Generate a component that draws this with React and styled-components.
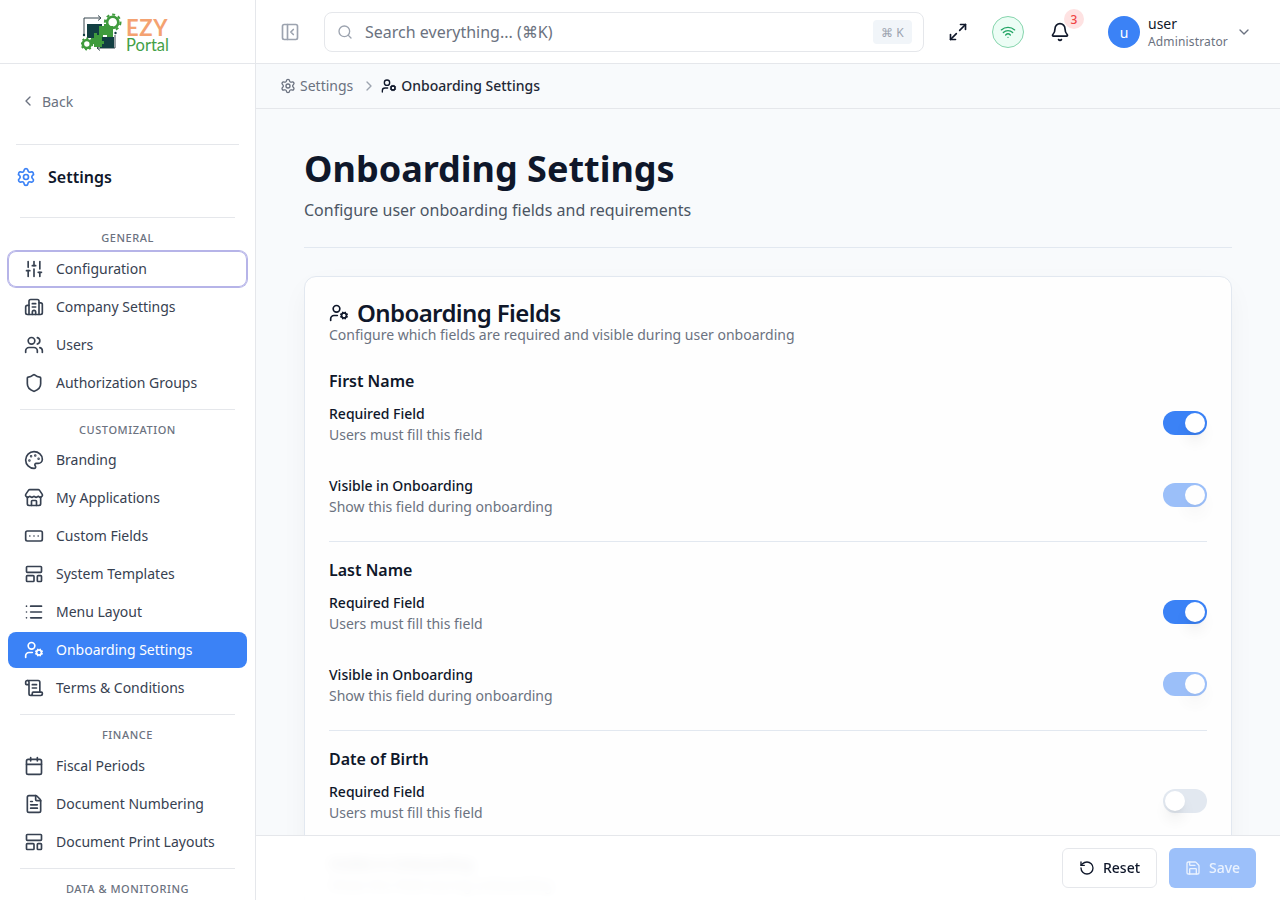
import React from "react";
import styled, { createGlobalStyle } from "styled-components";
import {
  Bell, Building2, Calendar, ChevronDown, ChevronLeft, ChevronRight, FileText, LayoutTemplate, List,
  Maximize2, Palette, PanelLeftClose, RectangleEllipsis, RotateCcw, Save, ScrollText, Search, Settings,
  Shield, SlidersVertical, Store, UserCog, Users, Wifi,
} from "lucide-react";

const Global = createGlobalStyle`
  html, body { margin: 0; height: 100%; overflow: hidden; }
  body { font-family: "Noto Sans", "Liberation Sans", sans-serif; color: #0f172a; background: #fff; }
  #root { height: 100vh; }
  * { box-sizing: border-box; }
`;

const Shell = styled.div`display: flex; height: 900px; overflow: hidden;`;
const Sidebar = styled.aside`width: 256px; flex: none; border-right: 1px solid #e5e7eb; background: #fff; overflow: hidden;`;
const LogoBar = styled.div`height: 64px; border-bottom: 1px solid #e5e7eb; display: flex; align-items: center; justify-content: center; padding-right: 5px; gap: 3px;`;
const LogoWords = styled.div`display: flex; flex-direction: column; font-family: Lato, "Open Sans", sans-serif; margin-top: 7px;`;
const LogoEzy = styled.span`font-size: 22px; font-weight: 700; line-height: 20px; color: #f4a271; letter-spacing: .6px;`;
const LogoPortal = styled.span`font-size: 16.5px; font-weight: 400; line-height: 15px; color: #43a047;`;
const BackRow = styled.div`height: 36px; margin: 19px 16px 0 20px; display: flex; align-items: center; gap: 6px; color: #6b7280; font-size: 14px;`;
const SideRule = styled.div`height: 1px; background: #e5e7eb; margin: ${p => p.$m};`;
const SettingsHead = styled.div`display: flex; align-items: center; gap: 12px; margin: 22px 16px 0; height: 20px; font-size: 16px; font-weight: 600; color: #0f172a; svg { color: #3b82f6; }`;
const GroupLabel = styled.div`height: 16px; line-height: 16px; margin: 12px 0 4.5px; text-align: center; font-size: 11px; font-weight: 500; letter-spacing: .55px; color: #6b7280;`;
const Items = styled.div`display: flex; flex-direction: column; gap: 2px; margin: 0 8px;`;
const Item = styled.div`
  height: 36px; line-height: 20px; border-radius: 8px; padding: 0 16px; display: flex; align-items: center; gap: 12px; font-size: 14px;
  color: ${p => (p.$active ? "#fff" : "#374151")};
  background: ${p => (p.$active ? "#3b82f6" : "transparent")};
  box-shadow: ${p => (p.$focus ? "0 0 0 1px #b6b4e8, inset 0 0 0 1px #b6b4e8" : "none")};
  svg { flex: none; }
`;

const Main = styled.div`flex: 1; min-width: 0; display: flex; flex-direction: column; position: relative; background: #f8fafc;`;
const Topbar = styled.header`height: 64px; flex: none; background: #fff; border-bottom: 1px solid #e5e7eb; display: flex; align-items: center; padding: 1px 24px 0;`;
const ToggleBtn = styled.div`color: #9ca3af; display: flex; margin-right: 24px;`;
const SearchBox = styled.div`width: 600px; height: 40px; border: 1px solid #e5e7eb; border-radius: 8px; display: flex; align-items: center; padding: 0 11px 0 12px; gap: 12px; color: #9ca3af; background: #fff;`;
const Placeholder = styled.span`flex: 1; font-size: 16px; color: #6b7280;`;
const Kbd = styled.span`width: 39px; height: 24px; border-radius: 4px; background: #f1f5f9; color: #9ca3af; font-size: 12px; display: flex; align-items: center; justify-content: center;`;
const IconAction = styled.div`display: flex; color: #0f172a; margin-left: ${p => p.$ml}px; position: relative;`;
const WifiDot = styled.div`width: 32px; height: 32px; margin-left: 24px; border-radius: 50%; background: #ecfdf5; border: 1px solid #86d5ad; color: #22a565; display: flex; align-items: center; justify-content: center;`;
const Badge = styled.span`position: absolute; top: -13px; left: 14px; width: 20px; height: 20px; border-radius: 50%; background: #fee2e2; color: #ef4444; font-size: 12px; font-weight: 500; display: flex; align-items: center; justify-content: center;`;
const Avatar = styled.div`width: 32px; height: 32px; margin-left: 38px; border-radius: 50%; background: #3b82f6; color: #fff; font-size: 14px; display: flex; align-items: center; justify-content: center;`;
const UserInfo = styled.div`margin-left: 8px; display: flex; flex-direction: column; padding-top: 2px;`;
const UserName = styled.span`font-size: 14px; line-height: 18px; color: #0f172a;`;
const UserRole = styled.span`font-size: 12px; line-height: 18px; letter-spacing: .15px; color: #6b7280;`;
const UserCaret = styled.div`margin-left: 8px; color: #6b7280; display: flex;`;

const Crumbs = styled.nav`height: 45px; line-height: 20px; flex: none; border-bottom: 1px solid #e5e7eb; display: flex; align-items: center; padding: 0 24px 1px; font-size: 14px; color: #6b7280;`;
const CrumbIcon = styled.span`display: flex; margin-right: 4px; color: ${p => p.$dark ? "#0f172a" : "#6b7280"};`;
const CrumbSep = styled.span`display: flex; margin: 0 4px 0 8px; color: #9ca3af;`;
const CrumbNow = styled.span`color: #1f2937; font-weight: 500;`;

const Content = styled.main`flex: 1; min-height: 0; overflow: hidden; padding: 32px 48px 0;`;
const PageTitle = styled.h1`margin: 0; font-size: 36px; line-height: 56px; font-weight: 700; color: #0f172a;`;
const PageSub = styled.p`margin: 0; font-size: 16px; line-height: 26px; color: #4b5563;`;
const PageRule = styled.div`height: 1px; background: #e2e8f0; margin: 24px 0 28px;`;
const Card = styled.section`border: 1px solid #e2e8f0; border-radius: 12px; background: #fefefe; box-shadow: 0 10px 30px -5px rgba(15, 23, 42, .06); padding: 24px;`;
const CardTitle = styled.h2`margin: 0; display: flex; align-items: center; gap: 8px; font-size: 24px; line-height: 24px; font-weight: 600; color: #0f172a; letter-spacing: -.6px;`;
const CardSub = styled.p`margin: 0 0 24px; font-size: 14px; line-height: 20px; color: #6b7280;`;
const FieldGroup = styled.div`padding-bottom: 21px; margin-bottom: 16px; border-bottom: ${p => p.$last ? "none" : "1px solid #e2e8f0"};`;
const FieldName = styled.h3`margin: 0 0 7px; font-size: 16px; line-height: 24px; font-weight: 600; color: #0f172a;`;
const SettingRow = styled.div`display: flex; align-items: center; justify-content: space-between; height: 48px; margin-bottom: 24px; &:last-child { margin-bottom: 0; }`;
const SettingLabel = styled.div`font-size: 14px; line-height: 21px; font-weight: 500; color: #0f172a;`;
const SettingHint = styled.div`font-size: 14px; line-height: 21px; color: #6b7280;`;
const Track = styled.div`
  width: 44px; height: 24px; border-radius: 12px; padding: 2px; display: flex; margin-bottom: 2px;
  justify-content: ${p => (p.$on ? "flex-end" : "flex-start")};
  background: ${p => (p.$on ? "#3b82f6" : "#e2e8f0")};
  opacity: ${p => (p.$dim ? 0.5 : 1)};
`;
const Thumb = styled.div`width: 20px; height: 20px; border-radius: 50%; background: #fff; box-shadow: 0 10px 15px -3px rgba(0,0,0,.1), 0 4px 6px -4px rgba(0,0,0,.1);`;

const Footer = styled.footer`position: absolute; left: 0; right: 0; bottom: 0; height: 65px; border-top: 1px solid #e5e7eb; background: rgba(255,255,255,.92); backdrop-filter: blur(6px); display: flex; align-items: center; justify-content: flex-end; gap: 12px; padding: 0 24px;`;
const ResetButton = styled.div`width: 95px; height: 40px; line-height: 20px; border: 1px solid #e5e7eb; border-radius: 6px; background: #fff; display: flex; align-items: center; justify-content: center; gap: 8px; font-size: 14px; font-weight: 500; color: #0f172a;`;
const SaveButton = styled.div`width: 87px; height: 40px; line-height: 20px; border-radius: 6px; background: #9cc0fa; display: flex; align-items: center; justify-content: center; gap: 8px; font-size: 14px; font-weight: 500; color: #eaf2fe;`;

const Logo = () => (
  <svg width="42" height="40" viewBox="0 0 42 40" fill="none">
    <path d="M3 23V6h16" stroke="#37474f" strokeWidth="1" />
    <path d="M17 3.5 20 6l-3 2.5" stroke="#37474f" strokeWidth="1" />
    <path d="M34 23v13H16" stroke="#37474f" strokeWidth="1" />
    <path d="M19 33.5 16 36l3 2.5" stroke="#37474f" strokeWidth="1" />
    <rect x="6" y="12" width="15" height="14" fill="#123f42" />
    <rect x="19" y="25" width="14" height="11" fill="#123f42" />
    <circle cx="31.7" cy="10.3" r="5.6" stroke="#3f9b3d" strokeWidth="2.6" />
    <circle cx="31.7" cy="10.3" r="7.8" stroke="#3f9b3d" strokeWidth="2" strokeDasharray="3 3" />
    <path d="M18 14h5v-2h4v2h5v11h-6v-2h-4v2h-4z" fill="#3f9b3d" />
    <path d="M13 21h3v2h5v6h2v3h-2v3h-8v-3h-3v-6h3z" fill="#3f9b3d" />
    <circle cx="5.8" cy="32" r="4" fill="#fff" stroke="#3f9b3d" strokeWidth="2.6" />
    <circle cx="5.8" cy="32" r="5.6" stroke="#3f9b3d" strokeWidth="1.6" strokeDasharray="2 2.2" />
    <circle cx="3" cy="23" r="1.2" fill="#123f42" />
    <circle cx="34.5" cy="21" r="1.2" fill="#123f42" />
  </svg>
);

const groups = [
  { label: "GENERAL", items: [["Configuration", SlidersVertical, "focus"], ["Company Settings", Building2], ["Users", Users], ["Authorization Groups", Shield]] },
  { label: "CUSTOMIZATION", items: [["Branding", Palette], ["My Applications", Store], ["Custom Fields", RectangleEllipsis], ["System Templates", LayoutTemplate], ["Menu Layout", List], ["Onboarding Settings", UserCog, "active"], ["Terms & Conditions", ScrollText]] },
  { label: "FINANCE", items: [["Fiscal Periods", Calendar], ["Document Numbering", FileText], ["Document Print Layouts", LayoutTemplate]] },
  { label: "DATA & MONITORING", items: [] },
];

const fields = [
  { name: "First Name", required: true, visible: true },
  { name: "Last Name", required: true, visible: true },
  { name: "Date of Birth", required: false, visible: false },
];

const Setting = ({ label, hint, on, dim }) => (
  <SettingRow>
    <div>
      <SettingLabel>{label}</SettingLabel>
      <SettingHint>{hint}</SettingHint>
    </div>
    <Track $on={on} $dim={dim}><Thumb /></Track>
  </SettingRow>
);

export default function App() {
  return (
    <Shell>
      <Global />
      <Sidebar>
        <LogoBar>
          <Logo />
          <LogoWords><LogoEzy>EZY</LogoEzy><LogoPortal>Portal</LogoPortal></LogoWords>
        </LogoBar>
        <BackRow><ChevronLeft size={16} />Back</BackRow>
        <SideRule $m="25px 16px 0 16px" />
        <SettingsHead><Settings size={20} />Settings</SettingsHead>
        {groups.map((g, i) => (
          <div key={g.label}>
            <SideRule $m={i === 0 ? "30.1px 20px 0 20px" : "8px 20px 0 20px"} />
            <GroupLabel>{g.label}</GroupLabel>
            <Items>
              {g.items.map(([text, Icon, state]) => (
                <Item key={text} $active={state === "active"} $focus={state === "focus"}>
                  <Icon size={20} />{text}
                </Item>
              ))}
            </Items>
          </div>
        ))}
      </Sidebar>
      <Main>
        <Topbar>
          <ToggleBtn><PanelLeftClose size={20} /></ToggleBtn>
          <SearchBox>
            <Search size={16} />
            <Placeholder>Search everything... (⌘K)</Placeholder>
            <Kbd>⌘ K</Kbd>
          </SearchBox>
          <IconAction $ml={24}><Maximize2 size={20} /></IconAction>
          <WifiDot><Wifi size={16} /></WifiDot>
          <IconAction $ml={26}><Bell size={20} /><Badge>3</Badge></IconAction>
          <Avatar>u</Avatar>
          <UserInfo><UserName>user</UserName><UserRole>Administrator</UserRole></UserInfo>
          <UserCaret><ChevronDown size={16} /></UserCaret>
        </Topbar>
        <Crumbs>
          <CrumbIcon><Settings size={16} /></CrumbIcon>Settings
          <CrumbSep><ChevronRight size={16} /></CrumbSep>
          <CrumbIcon $dark><UserCog size={16} /></CrumbIcon><CrumbNow>Onboarding Settings</CrumbNow>
        </Crumbs>
        <Content>
          <PageTitle>Onboarding Settings</PageTitle>
          <PageSub>Configure user onboarding fields and requirements</PageSub>
          <PageRule />
          <Card>
            <CardTitle><UserCog size={20} />Onboarding Fields</CardTitle>
            <CardSub>Configure which fields are required and visible during user onboarding</CardSub>
            {fields.map((f, i) => (
              <FieldGroup key={f.name} $last={i === fields.length - 1}>
                <FieldName>{f.name}</FieldName>
                <Setting label="Required Field" hint="Users must fill this field" on={f.required} />
                <Setting label="Visible in Onboarding" hint="Show this field during onboarding" on={f.visible} dim />
              </FieldGroup>
            ))}
          </Card>
        </Content>
        <Footer>
          <ResetButton><RotateCcw size={16} />Reset</ResetButton>
          <SaveButton><Save size={16} />Save</SaveButton>
        </Footer>
      </Main>
    </Shell>
  );
}
